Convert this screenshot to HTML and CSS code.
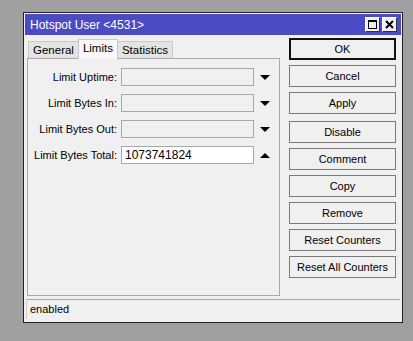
FILE: index.html
```html
<!DOCTYPE html>
<html lang="en">
<head>
    <meta charset="UTF-8">
    <title>Hotspot User &lt;4531&gt;</title>
    <link rel="stylesheet" href="styles.css">
</head>
<body>
    <div class="window">
        <div class="titlebar">
            <span class="title">Hotspot User &lt;4531&gt;</span>
            <div class="title-buttons">
                <span class="tb-btn">
                    <svg width="11" height="11" viewBox="0 0 11 11"><rect x="1.5" y="1.5" width="8" height="8" fill="none" stroke="#000" stroke-width="1"/><line x1="1.5" y1="2" x2="9.5" y2="2" stroke="#000" stroke-width="2"/></svg>
                </span>
                <span class="tb-btn">
                    <svg width="11" height="11" viewBox="0 0 11 11"><path d="M2 2 L9 9 M9 2 L2 9" stroke="#000" stroke-width="2"/></svg>
                </span>
            </div>
        </div>

        <div class="content">
            <div class="left">
                <div class="tabs">
                    <div class="tab">General</div>
                    <div class="tab active">Limits</div>
                    <div class="tab">Statistics</div>
                </div>
                <div class="panel">
                    <div class="row">
                        <label>Limit Uptime:</label>
                        <div class="field"></div>
                        <span class="arrow down"></span>
                    </div>
                    <div class="row">
                        <label>Limit Bytes In:</label>
                        <div class="field"></div>
                        <span class="arrow down"></span>
                    </div>
                    <div class="row">
                        <label>Limit Bytes Out:</label>
                        <div class="field"></div>
                        <span class="arrow down"></span>
                    </div>
                    <div class="row">
                        <label>Limit Bytes Total:</label>
                        <div class="field edit">1073741824</div>
                        <span class="arrow up"></span>
                    </div>
                </div>
            </div>

            <div class="buttons">
                <button class="default">OK</button>
                <button>Cancel</button>
                <button>Apply</button>
                <button class="sep">Disable</button>
                <button>Comment</button>
                <button>Copy</button>
                <button>Remove</button>
                <button>Reset Counters</button>
                <button>Reset All Counters</button>
            </div>
        </div>

        <div class="status">enabled</div>
    </div>
</body>
</html>
```

FILE: styles.css
```css
body {
    margin: 0;
    background: #a0a0a0;
    font-family: 'Liberation Sans', Arial, sans-serif;
    font-size: 11px;
    color: #000;
}

.window {
    margin: 12px 0 0 23px;
    width: 378px;
    height: 309px;
    background: #f0f0f0;
    border: 1px solid #222;
    display: flex;
    flex-direction: column;
}

.titlebar {
    height: 21px;
    margin: 1px;
    background: #4b4bc4;
    display: flex;
    align-items: center;
    justify-content: space-between;
    padding: 0 4px 0 5px;
}

.title {
    color: #fff;
    font-size: 12px;
}

.title-buttons {
    display: flex;
    gap: 2px;
}

.tb-btn {
    width: 13px;
    height: 13px;
    background: #f0f0f0;
    border: 1px solid #fff;
    border-right-color: #333;
    border-bottom-color: #333;
    display: flex;
    align-items: center;
    justify-content: center;
}

.content {
    display: flex;
    flex: 1;
    padding: 2px 6px 0 3px;
    gap: 9px;
}

.left {
    width: 253px;
    display: flex;
    flex-direction: column;
    padding-top: 2px;
}

.tabs {
    display: flex;
    height: 18px;
    align-items: flex-end;
    padding-left: 1px;
}

.tab {
    height: 16px;
    line-height: 16px;
    padding: 0 4px;
    background: #e4e4e4;
    border: 1px solid #c8c8c8;
    border-bottom: none;
    margin-right: -1px;
    font-size: 11.5px;
}

.tab.active {
    height: 19px;
    line-height: 16px;
    background: #f8f8f8;
    position: relative;
    z-index: 1;
    margin-bottom: -1px;
    padding: 0 4px;
}

.panel {
    flex: 1;
    border: 1px solid #a8a8a8;
    background: #f0f0f0;
    padding: 9px 0 0 0;
    display: flex;
    flex-direction: column;
    gap: 8px;
}

.row {
    display: flex;
    align-items: center;
    height: 18px;
}

.row label {
    width: 89px;
    text-align: right;
    padding-right: 4px;
}

.field {
    width: 128px;
    height: 16px;
    border: 1px solid #a8a8a8;
    background: #f0f0f0;
    line-height: 16px;
    padding-left: 3px;
    font-size: 12px;
}

.field.edit {
    background: #fff;
}

.arrow {
    margin-left: 6px;
    width: 0;
    height: 0;
    border-left: 5px solid transparent;
    border-right: 5px solid transparent;
}

.arrow.down {
    border-top: 5px solid #000;
}

.arrow.up {
    border-bottom: 5px solid #000;
}

.buttons {
    width: 107px;
    display: flex;
    flex-direction: column;
    gap: 5px;
}

button {
    height: 22px;
    background: #f0f0f0;
    border: 1px solid #7a7a7a;
    font-family: 'Liberation Sans', Arial, sans-serif;
    font-size: 11px;
    color: #000;
    padding: 0;
}

button.default {
    border: 2px solid #111;
}

button.sep {
    margin-top: 2px;
}

.status {
    margin: 3px 2px 3px 2px;
    height: 19px;
    line-height: 19px;
    border-top: 1px solid #a8a8a8;
    border-left: 1px solid #d0d0d0;
    padding-left: 3px;
}
```
